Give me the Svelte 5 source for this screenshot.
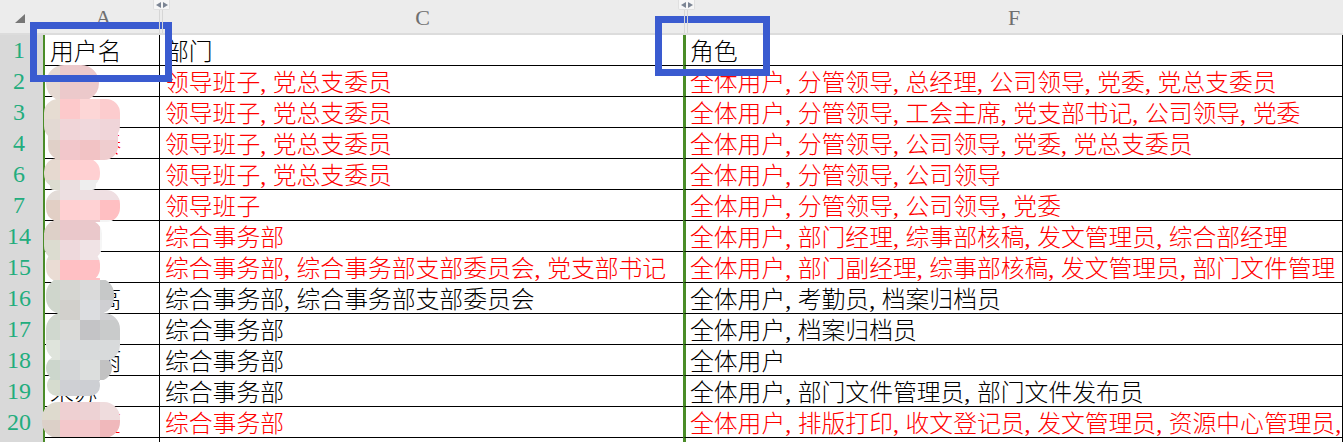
<script>
	const rows = [
		{ n: 1, name: '用户名', dept: '部门', role: '角色', head: true },
		{ n: 2, dept: '领导班子,党总支委员', role: '全体用户,分管领导,总经理,公司领导,党委,党总支委员', red: true },
		{ n: 3, dept: '领导班子,党总支委员', role: '全体用户,分管领导,工会主席,党支部书记,公司领导,党委', red: true },
		{ n: 4, name: '　　秦', dept: '领导班子,党总支委员', role: '全体用户,分管领导,公司领导,党委,党总支委员', red: true },
		{ n: 6, dept: '领导班子,党总支委员', role: '全体用户,分管领导,公司领导', red: true },
		{ n: 7, dept: '领导班子', role: '全体用户,分管领导,公司领导,党委', red: true },
		{ n: 14, dept: '综合事务部', role: '全体用户,部门经理,综事部核稿,发文管理员,综合部经理', red: true },
		{ n: 15, dept: '综合事务部,综合事务部支部委员会,党支部书记', role: '全体用户,部门副经理,综事部核稿,发文管理员,部门文件管理', red: true },
		{ n: 16, name: '　　高', dept: '综合事务部,综合事务部支部委员会', role: '全体用户,考勤员,档案归档员' },
		{ n: 17, dept: '综合事务部', role: '全体用户,档案归档员' },
		{ n: 18, name: '　　雨', dept: '综合事务部', role: '全体用户' },
		{ n: 19, name: '朱苏', dept: '综合事务部', role: '全体用户,部门文件管理员,部门文件发布员' },
		{ n: 20, name: '　　莹', dept: '综合事务部', role: '全体用户,排版打印,收文登记员,发文管理员,资源中心管理员,', red: true }
	];

	// mosaic that hides the names: y, height, then tile colours from x = 40 in 20px steps
	const tiles = [
		[65, 34, '#e5d9d2', '#ecc9cb', '#ecc9cb'],
		[99, 20, '#e6dcd2', '#fdc9cb', '#fdd6d6', '#fcccce'],
		[119, 21, '#e3d9d3', '#f0d5d8', '#f0d8dc', '#f0d5d9'],
		[140, 20, '#e0d0c8', '#f2c7cb', '#f2c3c5', '#efcdcf'],
		[160, 20, '#e6d9d0', '#ffcfd0', '#ffd0d2', '#ffd0d2'],
		[180, 10, '#dcdcd0', '#ebdfe0', '#eeeeee'],
		[190, 10, '#e3dcd8', '#eddfe1', '#eddfe1', '#efdfe2'],
		[200, 20, '#e2cfc5', '#ffd0d2', '#ffd2d4', '#ffbfc2'],
		[220, 20, '#ddd0c8', '#eac8cb', '#eac8cb', '#f4f4f4'],
		[240, 20, '#dcdcd0', '#eed9dc', '#f0e3e5', '#f6f6f6'],
		[260, 20, '#eadcd4', '#ffc0c4', '#ffc0c4'],
		[280, 20, '#cfd6cc', '#d6d6d2', '#dadada', '#c6c8c8'],
		[300, 20, '#cfd6cc', '#d2d0cc', '#dcdde0', '#cfcfd2'],
		[320, 20, '#d0d8cf', '#dadad8', '#c4c4c6', '#c9cbcb'],
		[340, 20, '#dfe4dc', '#d9dadb', '#d8dadb', '#d8dadb'],
		[360, 20, '#ccd6cc', '#d4d6d7', '#dcdedd', '#c2c2c2'],
		[380, 22, '#d6dccf', '#cfd0d4', '#cdcfd3'],
		[402, 18, '#dedace', '#eed0d2', '#edd2d4', '#efdcdd'],
		[420, 17, '#dcd0c8', '#f3c8cb', '#f3c8cb', '#f0b8bb']
	];

	// soft outlines of the mosaic patches: x, y, w, h, radius
	const outlines = [
		[46, 65, 53, 36, 18],
		[44, 99, 76, 41, 14],
		[48, 118, 70, 42, 14],
		[44, 158, 56, 30, 14],
		[50, 180, 46, 10, 4],
		[46, 190, 74, 32, 14],
		[44, 220, 58, 40, 14],
		[46, 250, 54, 32, 14],
		[46, 278, 68, 36, 16],
		[46, 313, 74, 48, 16],
		[46, 355, 66, 26, 14],
		[47, 375, 53, 21, 10],
		[42, 402, 78, 36, 16]
	];

	const parts = (text) => text.split(',');
</script>

{#snippet line(text)}
	{#each parts(text) as part, i}{#if i > 0}<span class="comma">,</span>{/if}{part}{/each}
{/snippet}

<div class="sheet">
	<div class="corner"><span class="triangle"></span></div>
	<div class="col">A<span class="handle"><i></i><i></i></span></div>
	<div class="col">C<span class="handle second"><i></i><i></i></span></div>
	<div class="col">F</div>

	{#each rows as row}
		<div class="num">{row.n}</div>
		<div class="cell first" class:red={row.red}>{row.name ?? ''}</div>
		<div class="cell dept" class:red={row.red}>{@render line(row.dept)}</div>
		<div class="cell role" class:red={row.red}>{@render line(row.role)}</div>
	{/each}

	<div class="num"></div>
	<div class="cell first"></div>
	<div class="cell dept"></div>
	<div class="cell role"></div>

	<svg class="mosaic" width="130" height="442" viewBox="0 0 130 442" aria-hidden="true">
		<defs>
			<clipPath id="patches">
				{#each outlines as [x, y, w, h, r]}
					<rect {x} {y} width={w} height={h} rx={r} />
				{/each}
			</clipPath>
		</defs>
		<g clip-path="url(#patches)">
			{#each tiles as [y, h, ...colours]}
				{#each colours as fill, i}
					<rect x={40 + i * 20} {y} width="20" height={h} {fill} />
				{/each}
			{/each}
		</g>
	</svg>

	<div class="mark mark-name"></div>
	<div class="mark mark-role"></div>
</div>

<style>
	:global(body) {
		margin: 0;
		background: #fff;
	}

	.sheet {
		position: relative;
		display: grid;
		grid-template-columns: 45px 115px 523px 660px;
		grid-template-rows: 35px repeat(14, 31px);
		width: 1344px;
		height: 442px;
		overflow: hidden;
		font-family: 'Noto Sans CJK SC', sans-serif;
		font-weight: 300;
		font-size: 23.8px;
		color: #000;
	}

	.corner,
	.col {
		background: #ececec;
		border-bottom: 2px solid #dcdcdc;
	}

	.corner {
		position: relative;
	}

	.triangle {
		position: absolute;
		left: 15px;
		top: 14px;
		width: 0;
		height: 0;
		border-style: solid;
		border-width: 0 0 9px 10px;
		border-color: transparent transparent #767676 transparent;
	}

	.col {
		position: relative;
		display: flex;
		align-items: flex-start;
		justify-content: center;
		padding-top: 5px;
		padding-left: 2px;
		font-family: 'Liberation Serif', serif;
		font-size: 22px;
		line-height: 26px;
		color: #6f6f6f;
	}

	.handle {
		position: absolute;
		z-index: 1;
		right: -10px;
		top: 0;
		display: flex;
		gap: 2px;
		justify-content: center;
		align-items: center;
		width: 17px;
		height: 10px;
		background: #f6f6f6;
		border: 1px solid #e0e0e0;
		border-top: 0;
		border-radius: 0 0 2px 2px;
		box-sizing: border-box;
	}

	.handle.second {
		right: -12px;
	}

	.handle::after {
		content: '';
		position: absolute;
		left: 5px;
		top: 10px;
		width: 2px;
		height: 23px;
		border-left: 1px solid #d6d6d6;
		border-right: 1px solid #d6d6d6;
	}

	.handle i {
		width: 0;
		height: 0;
		border-style: solid;
		border-width: 3.5px 5px 3.5px 0;
		border-color: transparent #7c8594 transparent transparent;
	}

	.handle i + i {
		border-width: 3.5px 0 3.5px 5px;
		border-color: transparent transparent transparent #7c8594;
	}

	.num {
		display: flex;
		align-items: center;
		justify-content: center;
		box-sizing: border-box;
		padding-right: 5px;
		background: #d9d9d9;
		border-right: 2px solid #4a8c28;
		font-family: 'Liberation Serif', serif;
		font-size: 24px;
		color: #22ad7d;
	}

	.cell {
		box-sizing: border-box;
		padding-left: 5px;
		border-bottom: 1px solid #000;
		line-height: 30px;
		white-space: nowrap;
	}

	.first {
		border-right: 1px solid #000;
	}

	.role {
		padding-left: 4px;
		border-left: 3px solid #4a8c28;
		border-right: 1px solid #000;
	}

	.red {
		color: #ff0000;
	}

	.comma {
		display: inline-block;
		width: 12.6px;
		font-family: 'Liberation Serif', serif;
	}

	.mosaic {
		position: absolute;
		left: 0;
		top: 0;
	}

	.mark {
		position: absolute;
		box-sizing: border-box;
		border: 7px solid #3a5bd0;
	}

	.mark-name {
		left: 30px;
		top: 22px;
		width: 142px;
		height: 60px;
	}

	.mark-role {
		left: 655px;
		top: 16px;
		width: 115px;
		height: 60px;
	}
</style>
